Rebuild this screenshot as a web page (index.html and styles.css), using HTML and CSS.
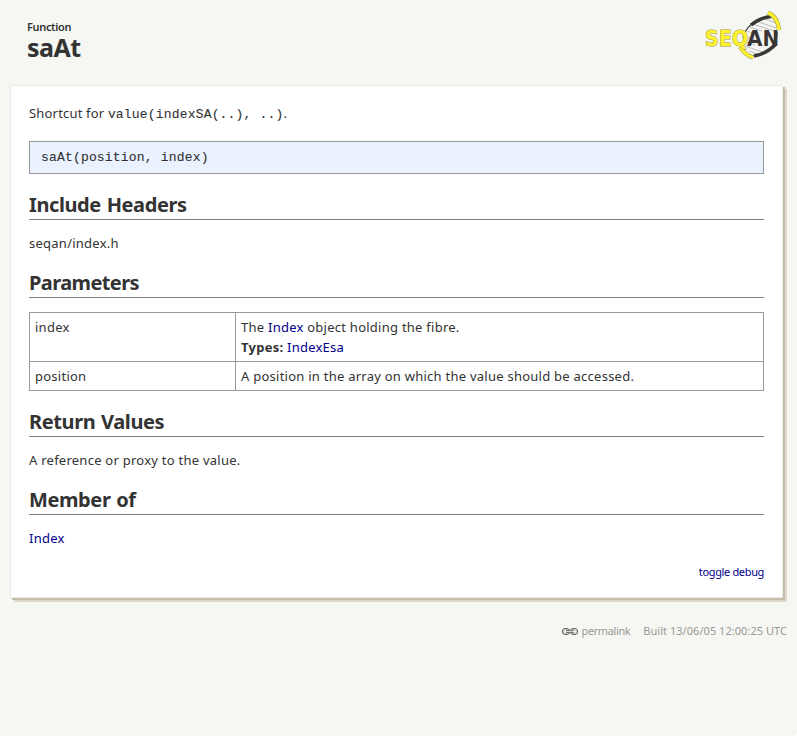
FILE: index.html
```html
<!DOCTYPE html>
<html lang="en">
<head>
<meta charset="utf-8">
<title>saAt</title>
<link rel="stylesheet" href="styles.css">
</head>
<body>
<div class="page">
<header class="header">
  <div class="title">
    <div class="kind">Function</div>
    <h1>saAt</h1>
  </div>
  <svg class="logo" width="80" height="52" viewBox="0 0 80 52" role="img" aria-label="SeqAn">
    <path d="M54 11L74 18M51 14L75 22M48 17L60 21M45 21L56 25M42 26L53 30M41 31L53 35M43 36L63 43M47 41L58 45M60 8L74 13" stroke="#aaa" stroke-width=".8"/>
    <path d="M41 28C43 18 53 8 69 6M75 22C76 34 66 45 50 46" fill="none" stroke="#444" stroke-width="1.2"/>
    <path d="M49 15Q57 8 69 6.500M52 46Q64 44 73 35" fill="none" stroke="#3a3636" stroke-width="3.4"/>
    <path d="M66 2.800Q76 7 77 20M38 37Q43 45 51 47.500" fill="none" stroke="#99984a" stroke-width="4.2"/>
    <path d="M66 2.800Q76 7 77 20M38 37Q43 45 51 47.500" fill="none" stroke="#fff22d" stroke-width="3.2"/>
    <text class="logo-seq" x="3" y="36" textLength="43.500" lengthAdjust="spacingAndGlyphs">SEQ</text>
    <text class="logo-an" x="45" y="36" textLength="32.500" lengthAdjust="spacingAndGlyphs">AN</text>
  </svg>
</header>
<main class="card">
  <p class="summary">Shortcut for <code>value(indexSA(..), ..)</code>.</p>
  <pre class="signature">saAt(position, index)</pre>
  <h2>Include Headers</h2>
  <p>seqan/index.h</p>
  <h2 class="tight">Parameters</h2>
  <table>
    <tr><td class="name">index</td><td>The <a href="#">Index</a> object holding the fibre.<br><strong>Types:</strong> <a href="#">IndexEsa</a></td></tr>
    <tr><td class="name">position</td><td>A position in the array on which the value should be accessed.</td></tr>
  </table>
  <h2>Return Values</h2>
  <p>A reference or proxy to the value.</p>
  <h2>Member of</h2>
  <p><a href="#">Index</a></p>
  <div class="debug"><a href="#">toggle debug</a></div>
</main>
<footer class="footer">
  <svg class="chain" width="16" height="7" viewBox="0 0 16 7" aria-hidden="true">
    <g fill="none"><rect x="1.500" y="1.500" width="5" height="4" rx="2" stroke="#bbb"/><rect x="9.500" y="1.500" width="5" height="4" rx="2" stroke="#bbb"/><rect x=".5" y=".5" width="7" height="6" rx="2.5" stroke="#666"/><rect x="8.5" y=".5" width="7" height="6" rx="2.5" stroke="#666"/><path d="M4 2.500h8M4 4.500h8" stroke="#777"/><path d="M4 3.500h8" stroke="#ddd"/></g>
  </svg>
  <span class="permalink">permalink</span>
  <span class="built">Built 13/06/05 12:00:25 UTC</span>
</footer>
</div>
</body>
</html>
```
FILE: styles.css
```css
* { box-sizing: border-box; }
html { background: #fff; }
body {
  margin: 0;
  color: #333;
  font: 13px/20px "Noto Sans", sans-serif;
  letter-spacing: .25px;
}
.page {
  height: 736px;
  padding: 0 10px;
  background: #f6f7f2;
  border-radius: 0 0 4px 4px;
}
a { color: #00008b; text-decoration: none; }
.header {
  display: flex;
  justify-content: space-between;
  height: 85px;
  padding: 20px 5px 0 17px;
}
.kind { font-size: 11px; line-height: 14px; font-weight: 600; letter-spacing: -.35px; }
h1 { margin: 0; font-size: 25px; line-height: 27px; letter-spacing: -.5px; }
.logo { margin-top: -10px; }
.logo text { font-family: "DejaVu Sans", sans-serif; font-weight: bold; font-size: 20.5px; }
.logo-seq { fill: #fff22d; stroke: #99984a; stroke-width: 1; paint-order: stroke; }
.logo-an { fill: #3a3636; }
.card {
  width: 773px;
  height: 513px;
  padding: 17px 18px;
  background: #fff;
  border: 1px solid #ebebe6;
  box-shadow: 2px 2px #c5bda9, 4px 4px #ded8c9;
}
.card p { margin: -1px 0 0; }
.card .summary { height: 38px; margin: 0; letter-spacing: .18px; }
code, pre {
  font-family: "Liberation Mono", monospace;
  font-size: 13px;
  letter-spacing: .18px;
  -webkit-text-stroke: .1px;
}
.signature {
  height: 33px;
  margin: 0 0 17px;
  padding: 6px 11px;
  background: #ebf2ff;
  border: 1px solid #999;
}
h2 {
  height: 29px;
  margin: 0 0 14px;
  font-size: 20px;
  line-height: 27px;
  letter-spacing: -.4px;
  word-spacing: 1px;
  border-bottom: 1px solid #808080;
}
.tight { letter-spacing: -.6px; }
p + h2 { margin-top: 16px; }
table { width: 735px; border-collapse: collapse; margin-bottom: 17px; }
td { border: 1px solid #999; padding: 4px 5px; vertical-align: top; }
.name { width: 206px; }
.debug { margin-top: 14px; text-align: right; font-size: 11px; letter-spacing: -.35px; }
.footer {
  display: flex;
  justify-content: flex-end;
  align-items: center;
  height: 20px;
  margin-top: 23px;
  color: #999;
  font-size: 11px;
  letter-spacing: .04px;
}
.chain { margin-top: 1px; }
.permalink { margin: 0 13px 0 4px; letter-spacing: -.4px; }
```
